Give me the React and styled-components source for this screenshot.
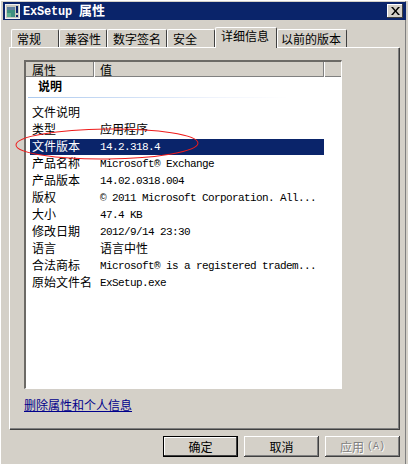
import React from "react";
import styled, { createGlobalStyle } from "styled-components";

const rows = [
  { name: "文件说明", value: "" },
  { name: "类型", value: "应用程序", cjk: true },
  { name: "文件版本", value: "14.2.318.4", selected: true },
  { name: "产品名称", value: "Microsoft® Exchange" },
  { name: "产品版本", value: "14.02.0318.004" },
  { name: "版权", value: "© 2011 Microsoft Corporation. All..." },
  { name: "大小", value: "47.4 KB" },
  { name: "修改日期", value: "2012/9/14 23:30" },
  { name: "语言", value: "语言中性", cjk: true },
  { name: "合法商标", value: "Microsoft® is a registered tradem..." },
  { name: "原始文件名", value: "ExSetup.exe" },
];

const tabs = ["常规", "兼容性", "数字签名", "安全", "详细信息", "以前的版本"];
const tabWidths = [48, 48, 60, 48, 62, 70];

const App = () => {
  return (
    <Window>
      <GlobalStyle />
      <TitleBar>
        <TitleIcon viewBox="0 0 15 15">
          <rect x="0" y="0" width="15" height="15" fill="#c8c8c0" />
          <rect x="0.5" y="0.5" width="14" height="14" fill="none" stroke="#f0f0f0" />
          <rect x="2" y="3" width="8" height="10" fill="#3f8f80" />
          <rect x="2" y="3" width="8" height="3" fill="#5f7f9f" />
          <rect x="2" y="9" width="4" height="4" fill="#60b090" />
          <rect x="11" y="2" width="2" height="7" fill="#0a246a" />
          <rect x="11" y="11" width="2" height="2" fill="#0a246a" />
        </TitleIcon>
        <TitleText>
          ExSetup <TitleCjk>属性</TitleCjk>
        </TitleText>
        <CloseButton>
          <svg width="9" height="8" viewBox="0 0 9 8">
            <path d="M0 0h2l2.5 3L7 0h2L5.5 4 9 8H7L4.5 5 2 8H0l3.5-4z" fill="#000" />
          </svg>
        </CloseButton>
      </TitleBar>
      <Body>
        <Tabs>
          {tabs.map((tab, i) => (
            <Tab key={tab} $width={tabWidths[i]} $active={i === 4}>
              {tab}
            </Tab>
          ))}
        </Tabs>
        <Panel>
          <ListView>
            <ListHeader>
              <HeaderCell $width={68}>属性</HeaderCell>
              <HeaderCell $width={230}>值</HeaderCell>
              <HeaderCell $width={16} />
            </ListHeader>
            <ListBody>
              <GroupTitle>说明</GroupTitle>
              <GroupLine />
              {rows.map((row) => (
                <Row key={row.name} $selected={row.selected}>
                  <Name>{row.name}</Name>
                  <Value $cjk={row.cjk}>{row.value}</Value>
                </Row>
              ))}
            </ListBody>
          </ListView>
          <RemoveLink href="#">删除属性和个人信息</RemoveLink>
        </Panel>
        <Buttons>
          <Button $primary>确定</Button>
          <Button>取消</Button>
          <Button $disabled>
            应用 <Access>(A)</Access>
          </Button>
        </Buttons>
        <Annotation viewBox="0 0 190 36">
          <ellipse
            cx="95"
            cy="18"
            rx="91"
            ry="15"
            fill="none"
            stroke="#ee1c1c"
            strokeWidth="1"
            transform="rotate(-0.6 95 18)"
          />
        </Annotation>
      </Body>
    </Window>
  );
};

const GlobalStyle = createGlobalStyle`
  html, body {
    margin: 0;
    padding: 0;
    background: #d4d0c8;
  }
`;

const Window = styled.div`
  width: 408px;
  height: 464px;
  box-sizing: border-box;
  padding: 2px 2px 0 3px;
  background: #d4d0c8;
  border-left: 1px solid #fff;
  box-shadow: inset 0 1px 0 #fff, inset -2px 0 0 #d4d0c8, inset -3px 0 0 #808080;
  font-family: "Noto Sans CJK SC", sans-serif;
  font-size: 12px;
  color: #000;
  overflow: hidden;
`;

const TitleBar = styled.div`
  height: 18px;
  width: 403px;
  margin-left: -1px;
  display: flex;
  align-items: center;
  padding: 0 3px 0 2px;
  box-sizing: border-box;
  background: #0a246a;
`;

const TitleIcon = styled.svg`
  width: 15px;
  height: 15px;
  flex: none;
`;

const TitleText = styled.div`
  flex: 1;
  margin-left: 3px;
  font-family: "Liberation Mono", "Noto Sans CJK SC", monospace;
  font-weight: 700;
  font-size: 12px;
  line-height: 16px;
  color: #fff;
  letter-spacing: -0.2px;
  white-space: pre;
`;

const TitleCjk = styled.span`
  font-family: "Noto Sans CJK SC", sans-serif;
  font-size: 13px;
  letter-spacing: 0;
`;

const CloseButton = styled.div`
  width: 16px;
  height: 14px;
  display: flex;
  align-items: center;
  justify-content: center;
  background: #d4d0c8;
  box-shadow: inset -1px -1px 0 #404040, inset 1px 1px 0 #fff;
`;

const Body = styled.div`
  position: relative;
  padding: 7px 0 0 5px;
`;

const Tabs = styled.div`
  display: flex;
  align-items: flex-end;
  height: 20px;
  padding-left: 2px;
`;

const Tab = styled.div`
  position: relative;
  z-index: ${(p) => (p.$active ? 2 : 1)};
  width: ${(p) => p.$width}px;
  height: ${(p) => (p.$active ? 21 : 18)}px;
  margin-bottom: ${(p) => (p.$active ? -1 : 0)}px;
  box-sizing: border-box;
  display: flex;
  align-items: center;
  padding-left: 5px;
  padding-bottom: ${(p) => (p.$active ? 4 : 0)}px;
  background: #d4d0c8;
  border-top: 1px solid #fff;
  border-left: 1px solid #fff;
  border-right: 1px solid #404040;
  border-radius: 2px 2px 0 0;
  white-space: nowrap;
  line-height: 16px;

  &:last-child {
    padding-left: 3px;
  }
`;

const Panel = styled.div`
  width: 390px;
  height: 382px;
  box-sizing: border-box;
  padding: 12px 0 0 14px;
  background: #d4d0c8;
  border-top: 1px solid #fff;
  border-left: 1px solid #fff;
  box-shadow: inset -1px -1px 0 #808080, 1px 1px 0 #404040;
`;

const ListView = styled.div`
  width: 318px;
  height: 329px;
  box-sizing: border-box;
  display: flex;
  flex-direction: column;
  background: #fff;
  border-top: 2px solid #6c6a66;
  border-left: 2px solid #6c6a66;
  border-right: 1px solid #fff;
  border-bottom: 1px solid #fff;
`;

const ListHeader = styled.div`
  display: flex;
  height: 15px;
  flex: none;
  background: #d4d0c8;
  box-shadow: inset 0 -1px 0 #808080;
`;

const HeaderCell = styled.div`
  width: ${(p) => p.$width}px;
  box-sizing: border-box;
  padding-left: 6px;
  line-height: 15px;
  overflow: hidden;
  border-right: 1px solid #808080;
  box-shadow: 1px 0 0 #fff;

  &:last-child {
    border-right: 0;
    box-shadow: none;
  }
`;

const ListBody = styled.div`
  flex: 1;
  padding-left: 4px;
`;

const GroupTitle = styled.div`
  height: 20px;
  padding-left: 8px;
  line-height: 18px;
  font-weight: 700;
`;

const GroupLine = styled.div`
  width: 260px;
  height: 1px;
  margin: 0 0 7px -2px;
  background: linear-gradient(to right, #aac8ee, #eef2fb 70%, #fff);
`;

const Row = styled.div`
  display: flex;
  align-items: center;
  width: 294px;
  height: 16px;
  margin-bottom: 1px;
  color: ${(p) => (p.$selected ? "#fff" : "#000")};
  background: ${(p) => (p.$selected ? "#0a246a" : "transparent")};
`;

const Name = styled.div`
  width: 70px;
  flex: none;
  padding: 0 0 2px 2px;
  box-sizing: border-box;
  line-height: 14px;
  white-space: nowrap;
`;

const Value = styled.div`
  font-family: ${(p) =>
    p.$cjk ? '"Noto Sans CJK SC", sans-serif' : '"Liberation Mono", monospace'};
  font-size: ${(p) => (p.$cjk ? 12 : 11)}px;
  letter-spacing: ${(p) => (p.$cjk ? 0 : -0.6)}px;
  line-height: 14px;
  padding-bottom: ${(p) => (p.$cjk ? 2 : 0)}px;
  white-space: pre;
`;

const RemoveLink = styled.a`
  display: block;
  width: max-content;
  margin-top: 8px;
  color: #00008b;
  line-height: 16px;
  text-decoration: underline;
`;

const Buttons = styled.div`
  display: flex;
  justify-content: flex-end;
  gap: 6px;
  width: 391px;
  margin-top: 7px;
`;

const Button = styled.div`
  width: 75px;
  height: 21px;
  box-sizing: border-box;
  display: flex;
  align-items: center;
  justify-content: center;
  gap: 3px;
  line-height: 16px;
  background: #d4d0c8;
  color: ${(p) => (p.$disabled ? "#808080" : "#000")};
  text-shadow: ${(p) => (p.$disabled ? "1px 1px 0 #fff" : "none")};
  box-shadow: ${(p) =>
    p.$primary
      ? "inset 0 0 0 1px #000, inset -2px -2px 0 #404040, inset 2px 2px 0 #fff"
      : "inset -1px -1px 0 #404040, inset 1px 1px 0 #fff, inset -2px -2px 0 #808080"};
`;

const Access = styled.span`
  font-family: "Liberation Mono", monospace;
  font-size: 10px;
`;

const Annotation = styled.svg`
  position: absolute;
  left: 8px;
  top: 106px;
  width: 190px;
  height: 36px;
  pointer-events: none;
`;

export default App;
